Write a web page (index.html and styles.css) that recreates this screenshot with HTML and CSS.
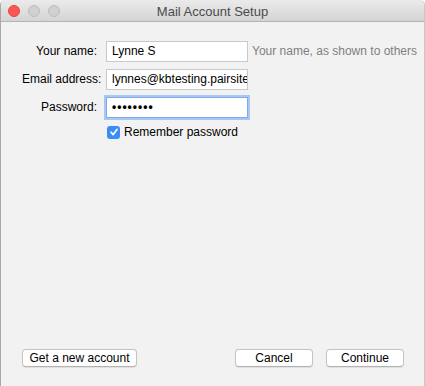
FILE: index.html
```html
<!DOCTYPE html>
<html>
<head>
<meta charset="utf-8">
<link rel="stylesheet" href="styles.css">
</head>
<body>
<div class="window">
  <div class="titlebar">
    <div class="lights">
      <span class="light red"></span>
      <span class="light gray"></span>
      <span class="light gray"></span>
    </div>
    <div class="title">Mail Account Setup</div>
  </div>
  <div class="content">
    <div class="form">
      <div class="row">
        <label class="label">Your name:</label>
        <div class="field">Lynne S</div>
        <span class="hint">Your name, as shown to others</span>
      </div>
      <div class="row">
        <label class="label">Email address:</label>
        <div class="field">lynnes@kbtesting.pairsite</div>
      </div>
      <div class="row">
        <label class="label">Password:</label>
        <div class="field focus"><span class="dots">••••••••</span></div>
      </div>
      <div class="row check-row">
        <span class="label"></span>
        <span class="checkbox"><svg width="10" height="10" viewBox="0 0 10 10"><path d="M2 5.2 L4.2 7.6 L8 2.4" fill="none" stroke="#fff" stroke-width="1.7" stroke-linecap="round" stroke-linejoin="round"/></svg></span>
        <span class="check-label">Remember password</span>
      </div>
    </div>
    <div class="buttons">
      <button class="btn wide">Get a new account</button>
      <div class="right">
        <button class="btn">Cancel</button>
        <button class="btn">Continue</button>
      </div>
    </div>
  </div>
</div>
</body>
</html>
```
FILE: styles.css
```css
html, body {
  margin: 0;
  padding: 0;
  background: #ffffff;
}
body {
  width: 425px;
  height: 386px;
  overflow: hidden;
  font-family: "Liberation Sans", Arial, sans-serif;
  font-size: 13px;
  color: #000;
}
.window {
  width: 425px;
  height: 386px;
  box-sizing: border-box;
  background: #f2f2f2;
  border-left: 1px solid #a8a8a8;
  border-right: 1px solid #c8c8c8;
  border-radius: 5px 5px 0 0;
  display: flex;
  flex-direction: column;
  overflow: hidden;
}
.titlebar {
  height: 22px;
  flex-shrink: 0;
  box-sizing: border-box;
  background: linear-gradient(#ebebeb, #d4d4d4);
  border-bottom: 1px solid #b4b4b4;
  position: relative;
  display: flex;
  align-items: center;
  justify-content: center;
}
.lights {
  position: absolute;
  left: 7px;
  top: 5px;
  display: flex;
  gap: 8px;
}
.light {
  width: 12px;
  height: 12px;
  border-radius: 50%;
  box-sizing: border-box;
}
.red {
  background: #fc5753;
  border: 1px solid #df4744;
}
.gray {
  background: #d0d0d0;
  border: 1px solid #bdbdbd;
}
.title {
  font-size: 13px;
  color: #4a4a4a;
  padding-top: 1px;
}
.content {
  flex: 1;
  display: flex;
  flex-direction: column;
  justify-content: space-between;
  padding: 18px 10px 19px 21px;
}
.form {
  display: flex;
  flex-direction: column;
  gap: 6px;
}
.row {
  display: flex;
  align-items: center;
  height: 22px;
  white-space: nowrap;
}
.label {
  width: 75px;
  flex-shrink: 0;
  text-align: right;
  margin-right: 9px;
  font-size: 12px;
}
.field {
  width: 142px;
  flex-shrink: 0;
  height: 21px;
  box-sizing: border-box;
  border: 1px solid #c9c9c9;
  background: #fff;
  padding: 0 4px 0 5px;
  line-height: 19px;
  font-size: 12px;
  white-space: nowrap;
  overflow: hidden;
}
.field.focus {
  border: 1px solid #7eaaec;
  box-shadow: 0 0 0 2px #a6c8f5;
}
.dots {
  font-size: 12px;
  letter-spacing: 1px;
  font-weight: bold;
}
.hint {
  margin-left: 4px;
  color: #7f7f7f;
  font-size: 12px;
}
.check-row {
  margin-top: -3px;
}
.checkbox {
  width: 13px;
  height: 13px;
  flex-shrink: 0;
  border-radius: 3px;
  background: #3b8cf6;
  display: flex;
  align-items: center;
  justify-content: center;
  margin-left: 1px;
  margin-right: 4px;
}
.check-label {
  font-size: 12px;
}
.buttons {
  display: flex;
  justify-content: space-between;
  align-items: center;
  padding-right: 10px;
}
.right {
  display: flex;
  gap: 13px;
}
.btn {
  font-family: "Liberation Sans", Arial, sans-serif;
  font-size: 12px;
  height: 18px;
  padding: 0;
  background: #fff;
  border: 1px solid #c4c4c4;
  border-bottom-color: #b2b2b2;
  border-radius: 4px;
  box-shadow: 0 0.5px 1px rgba(0,0,0,0.08);
  width: 78px;
  color: #000;
}
.btn.wide {
  width: 115px;
}
```
